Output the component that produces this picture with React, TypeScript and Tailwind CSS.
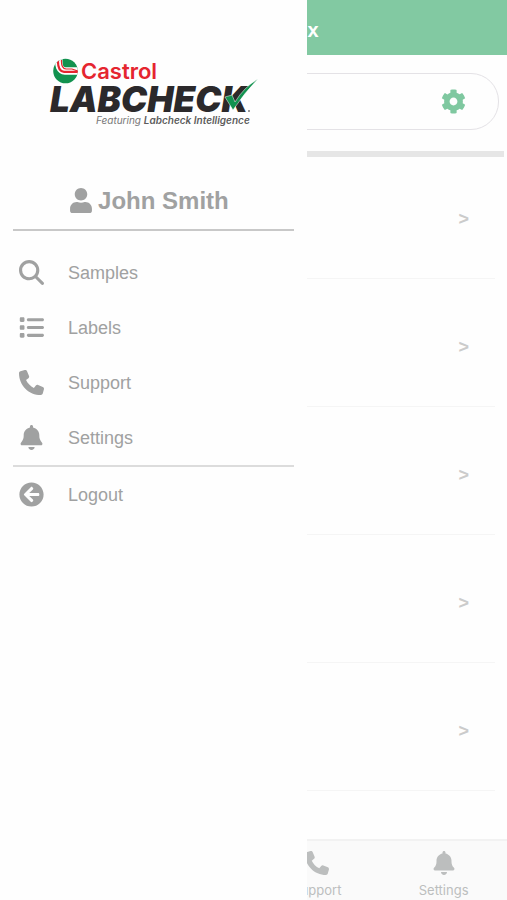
import type { ReactNode } from 'react';
import type { IconType } from 'react-icons';
import { FaArrowCircleLeft, FaCog, FaUser } from 'react-icons/fa';
import { FaBell, FaList, FaMagnifyingGlass, FaPhone } from 'react-icons/fa6';

interface NavItem {
  label: string;
  icon: IconType;
}

const NAV_ITEMS: NavItem[] = [
  { label: 'Samples', icon: FaMagnifyingGlass },
  { label: 'Labels', icon: FaList },
  { label: 'Support', icon: FaPhone },
  { label: 'Settings', icon: FaBell },
];

const SAMPLE_ROWS = [1, 2, 3, 4, 5];

function Logo() {
  return (
    <svg
      viewBox="0 0 212 72"
      className="h-[72px] w-[212px]"
      role="img"
      aria-label="Castrol Labcheck"
    >
      <clipPath id="roundel">
        <circle cx="18.500" cy="15" r="12.300" />
      </clipPath>
      <g clipPath="url(#roundel)" fill="none">
        <rect x="6" y="2" width="26" height="26" fill="#12924f" />
        <path d="M12 1 Q10.500 14.500 18 15 H32" stroke="#fff" strokeWidth="7.500" />
        <path d="M11 4 Q10.500 15.500 17 15.800 H32" stroke="#e5252f" strokeWidth="2.200" />
        <path d="M14.500 4 Q14 12.500 19 13 H25 L32 15.500" stroke="#e5252f" strokeWidth="1.200" />
      </g>
      <text x="34" y="23" fill="#e5252f" fontFamily="Inter, sans-serif" fontWeight="600" fontSize="22">
        Castrol
      </text>
      <text
        x="3"
        y="56"
        fill="#2b292b"
        fontFamily="Inter, sans-serif"
        fontWeight="900"
        fontStyle="italic"
        fontSize="35"
      >
        LABCHECK
      </text>
      <circle cx="202" cy="55" r="1" fill="#777" />
      <path
        d="M178 41 L185 39 L188 46 Q197 31 211 23 Q198 36 186 54Z"
        fill="#12924f"
        stroke="#fefefe"
        strokeWidth="0.500"
      />
      <text
        x="49"
        y="68"
        fill="#777"
        fontFamily="Inter, sans-serif"
        fontStyle="italic"
        fontSize="10"
      >
        Featuring <tspan fontWeight="600" fill="#5c5c5c">Labcheck Intelligence</tspan>
      </text>
    </svg>
  );
}

function MenuButton({ icon: Icon, children }: { icon: IconType; children: ReactNode }) {
  return (
    <button type="button" className="flex h-[55px] w-full items-center gap-6 px-1.5 text-left text-lg">
      <Icon className="size-[25px]" />
      {children}
    </button>
  );
}

function Drawer() {
  return (
    <aside className="absolute inset-y-0 left-0 w-[60.5%] bg-[#fefefe] px-[13px] text-[#a0a1a1]">
      <div className="flex h-[172px] justify-center pt-14">
        <Logo />
      </div>
      <div className="flex h-[59px] items-center justify-center gap-1.5 border-b-2 border-[#c8c8c8] pr-2">
        <FaUser className="h-[25px] w-[22px]" />
        <h2 className="text-2xl font-bold">John Smith</h2>
      </div>
      <nav className="pt-3.5">
        {NAV_ITEMS.map((item) => (
          <MenuButton key={item.label} icon={item.icon}>
            {item.label}
          </MenuButton>
        ))}
        <div className="border-t-2 border-[#dcdcdc]">
          <MenuButton icon={FaArrowCircleLeft}>Logout</MenuButton>
        </div>
      </nav>
    </aside>
  );
}

export default function App() {
  return (
    <div className="relative flex min-h-screen flex-col overflow-hidden bg-[#fefefe] font-['Liberation_Sans',sans-serif]">
      <header className="flex h-[55px] items-center justify-center bg-[#82c9a2] pt-1 text-xl font-bold text-white">
        <h1>Sample Inbox</h1>
      </header>
      <div className="p-2 pt-[18px] pb-[21px]">
        <div className="flex h-[57px] items-center rounded-[28px] border border-[#e4e2e6] pr-8">
          <input type="text" aria-label="Search samples" className="min-w-0 flex-1 pl-6 outline-none" />
          <button type="button" aria-label="Filter settings">
            <FaCog className="size-[25px] text-[#7fc8a0]" />
          </button>
        </div>
      </div>
      <div className="mr-[3px] h-1.5 bg-[#e6e6e6]" />
      <ul className="-mt-1.5 flex-1 px-3">
        {SAMPLE_ROWS.map((row) => (
          <li
            key={row}
            className="flex h-32 items-center justify-end border-b border-[#f5f5f5] pt-2 pr-[26px] text-lg font-bold text-[#cbcbcb]"
          >
            &gt;
          </li>
        ))}
      </ul>
      <nav className="grid h-[61px] grid-cols-4 border-t-2 border-[#f2f2f2] bg-[#fafafa] text-[#bcbebe]">
        {NAV_ITEMS.map(({ label, icon: Icon }) => (
          <button
            key={label}
            type="button"
            className="flex flex-col items-center gap-1.5 pt-2.5 font-['Inter',sans-serif] text-[13px]"
          >
            <Icon className="size-6" />
            {label}
          </button>
        ))}
      </nav>
      <Drawer />
    </div>
  );
}
